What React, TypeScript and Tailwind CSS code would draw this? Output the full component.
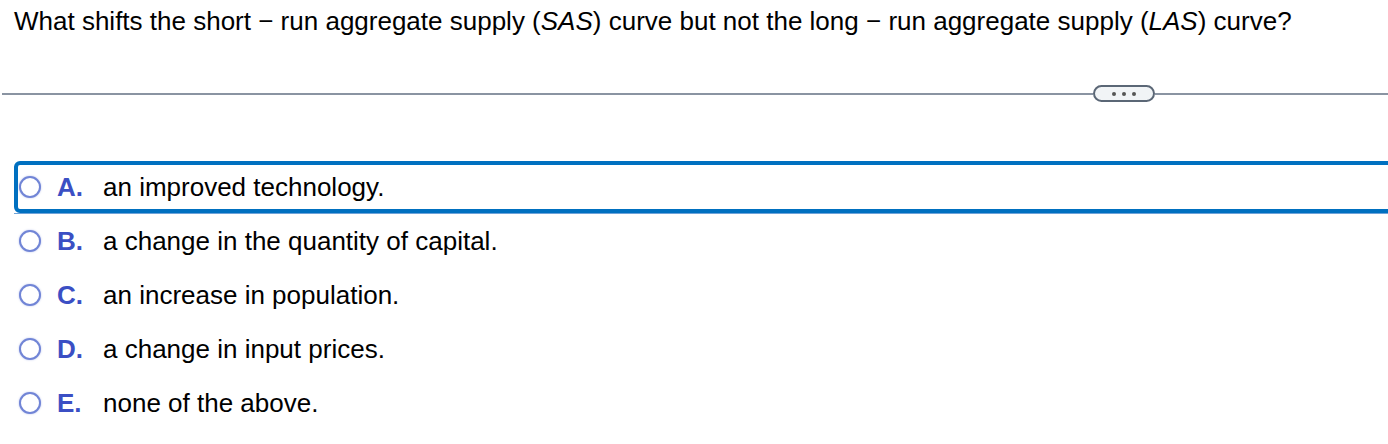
import React from "react";

const options = [
  { letter: "A.", text: "an improved technology." },
  { letter: "B.", text: "a change in the quantity of capital." },
  { letter: "C.", text: "an increase in population." },
  { letter: "D.", text: "a change in input prices." },
  { letter: "E.", text: "none of the above." },
];

const Radio = () => (
  <span className="block w-[22px] h-[22px] shrink-0 rounded-full border-2 border-[#7185d6] bg-white shadow-[0_0_2px_rgba(90,110,210,0.45)]" />
);

const OptionBody = ({ letter, text }: { letter: string; text: string }) => (
  <>
    <Radio />
    <span className="ml-[16px] w-[46px] shrink-0 font-bold text-[#3b4fc4]">{letter}</span>
    <span className="text-black whitespace-nowrap">{text}</span>
  </>
);

const App = () => {
  return (
    <div className="w-[1388px] h-[444px] bg-white overflow-hidden font-['Liberation_Sans',Arial,sans-serif]">
      <p className="pl-[14px] pt-[6px] text-[26px] leading-[30px] text-black whitespace-nowrap">
        What shifts the short − run aggregate supply (<i>SAS</i>) curve but not the long − run aggregate supply (<i>LAS</i>) curve?
      </p>

      {/* divider with the "more" pill */}
      <div className="mt-[49px] flex items-center pl-[2px]">
        <div className="h-[2px] w-[1091px] bg-[#8a94a2]" />
        <div className="h-[17px] w-[62px] shrink-0 rounded-full border-2 border-[#5b6776] bg-[#f1f4f6] flex items-center justify-center gap-[6px]">
          <span className="w-[4px] h-[4px] rounded-full bg-[#555]" />
          <span className="w-[4px] h-[4px] rounded-full bg-[#555]" />
          <span className="w-[4px] h-[4px] rounded-full bg-[#555]" />
        </div>
        <div className="h-[2px] flex-1 bg-[#8a94a2]" />
      </div>

      <div className="mt-[59px] text-[26px]">
        {/* focused first option */}
        <div className="pl-[14px]">
          <div className="h-[52px] w-[1400px] flex items-center pl-[1px] border-4 border-[#0070c0] rounded-[6px]">
            <OptionBody {...options[0]} />
          </div>
          <div className="h-px bg-[#6ea3d9]" />
        </div>
        {options.slice(1).map((o) => (
          <div key={o.letter} className="h-[54px] flex items-center pl-[19px]">
            <OptionBody {...o} />
          </div>
        ))}
      </div>
    </div>
  );
};

export default App;
